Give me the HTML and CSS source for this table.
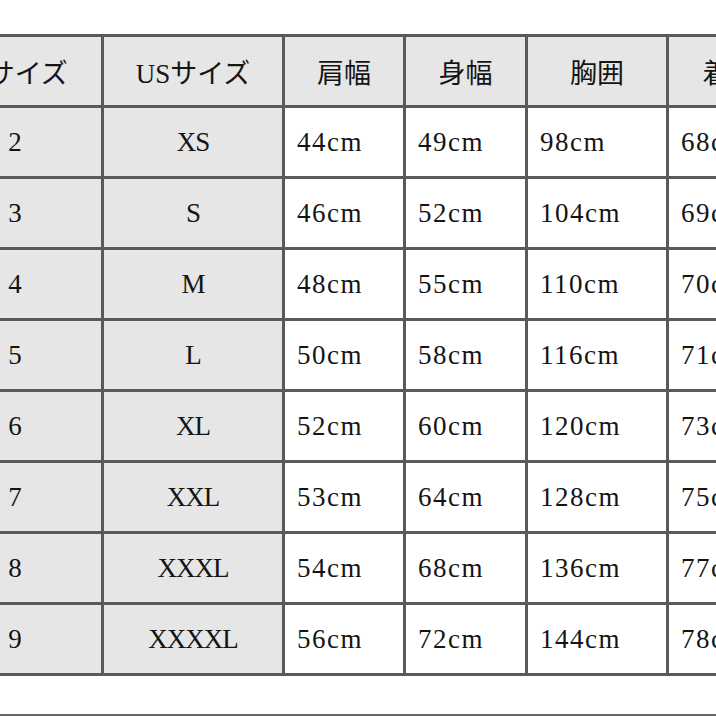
FILE: index.html
```html
<!DOCTYPE html>
<html lang="ja">
<head>
<meta charset="utf-8">
<title>サイズ表</title>
<link rel="stylesheet" href="styles.css">
</head>
<body>
<div class="page">
  <div class="chart">
    <div class="cell head">JPサイズ</div>
    <div class="cell head">USサイズ</div>
    <div class="cell head">肩幅</div>
    <div class="cell head">身幅</div>
    <div class="cell head">胸囲</div>
    <div class="cell head">着丈</div>

    <div class="cell key">2</div><div class="cell key size">XS</div>
    <div class="cell val">44cm</div><div class="cell val">49cm</div><div class="cell val">98cm</div><div class="cell val">68cm</div>

    <div class="cell key">3</div><div class="cell key size">S</div>
    <div class="cell val">46cm</div><div class="cell val">52cm</div><div class="cell val">104cm</div><div class="cell val">69cm</div>

    <div class="cell key">4</div><div class="cell key size">M</div>
    <div class="cell val">48cm</div><div class="cell val">55cm</div><div class="cell val">110cm</div><div class="cell val">70cm</div>

    <div class="cell key">5</div><div class="cell key size">L</div>
    <div class="cell val">50cm</div><div class="cell val">58cm</div><div class="cell val">116cm</div><div class="cell val">71cm</div>

    <div class="cell key">6</div><div class="cell key size">XL</div>
    <div class="cell val">52cm</div><div class="cell val">60cm</div><div class="cell val">120cm</div><div class="cell val">73cm</div>

    <div class="cell key">7</div><div class="cell key size">XXL</div>
    <div class="cell val">53cm</div><div class="cell val">64cm</div><div class="cell val">128cm</div><div class="cell val">75cm</div>

    <div class="cell key">8</div><div class="cell key size">XXXL</div>
    <div class="cell val">54cm</div><div class="cell val">68cm</div><div class="cell val">136cm</div><div class="cell val">77cm</div>

    <div class="cell key">9</div><div class="cell key size">XXXXL</div>
    <div class="cell val">56cm</div><div class="cell val">72cm</div><div class="cell val">144cm</div><div class="cell val">78cm</div>
  </div>
  <div class="rule"></div>
</div>
</body>
</html>
```
FILE: styles.css
```css
html, body {
  margin: 0;
  padding: 0;
  background: #ffffff;
  overflow: hidden;
}
.page {
  width: 716px;
  height: 716px;
  overflow: hidden;
  padding-top: 34px;
  box-sizing: border-box;
}
.chart {
  display: grid;
  grid-template-columns: 172px 178px 118px 119px 138px 121px;
  grid-auto-rows: 68px;
  gap: 3px;
  padding: 3px;
  background: #5a5a5a;
  width: max-content;
  margin-left: -74px;
  font-family: "Liberation Serif", "Noto Sans CJK JP", serif;
  font-size: 27px;
  color: #141414;
}
.cell {
  display: flex;
  align-items: center;
  background: #ffffff;
  white-space: nowrap;
}
.head {
  background: #e6e6e6;
  justify-content: center;
}
.key {
  background: #e6e6e6;
  justify-content: center;
}
.size {
  letter-spacing: -1px;
}
.val {
  padding-left: 12px;
  letter-spacing: 1.5px;
}
.rule {
  margin-top: 38px;
  height: 2px;
  background: #666666;
}
```
